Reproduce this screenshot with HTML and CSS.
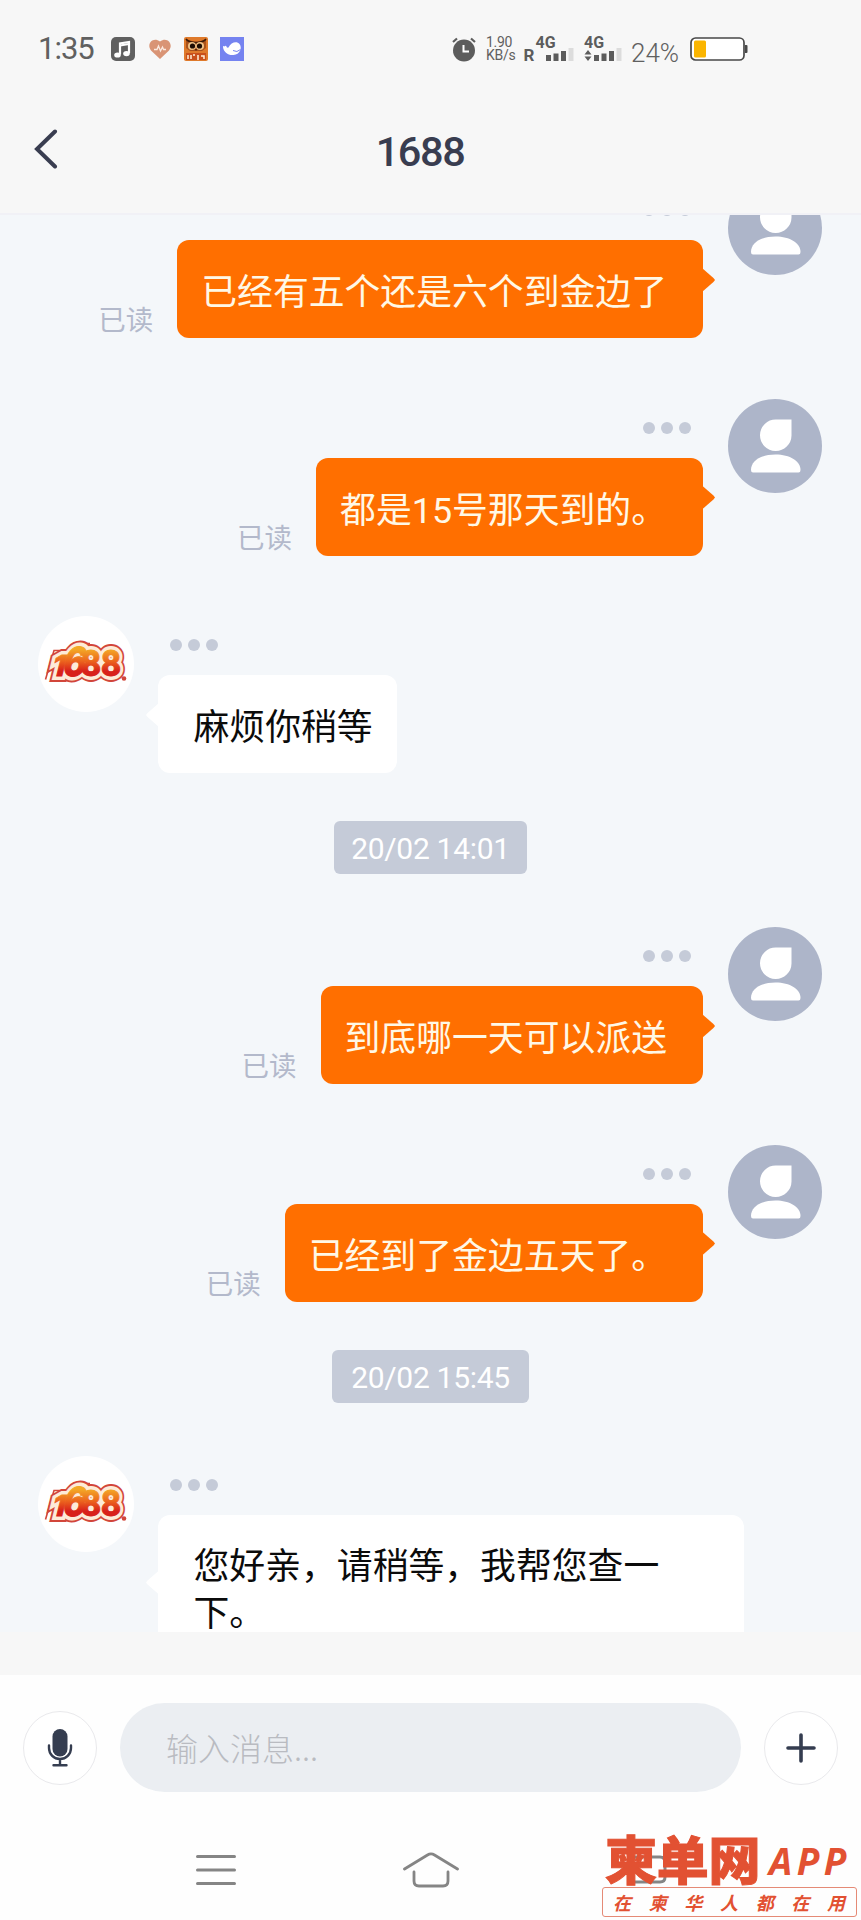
FILE: index.html
```html
<!DOCTYPE html>
<html lang="zh-CN">
<head>
<meta charset="utf-8">
<title>1688</title>
<link rel="stylesheet" href="styles.css">
</head>
<body>
<svg class="defs" width="0" height="0" aria-hidden="true">
  <defs>
    <linearGradient id="fire" gradientUnits="userSpaceOnUse" x1="0" y1="-29" x2="0" y2="0">
      <stop offset="0.1" stop-color="#f3a826"/>
      <stop offset="0.5" stop-color="#ec651e"/>
      <stop offset="0.85" stop-color="#d8201a"/>
    </linearGradient>
    <symbol id="user" viewBox="0 0 94 94">
      <circle cx="47" cy="47" r="47" fill="#adb5c9"/>
      <path d="M48 20.500H63.500V36.500A15.750 15.750 0 1 1 48 20.500Z" fill="#fff"/>
      <path d="M23 71C23 62 33 55.500 47.500 55.500S72.500 62 72.500 71Q72.500 73.500 70.500 73.500H25Q23 73.500 23 71Z" fill="#fff"/>
    </symbol>
    <symbol id="shop" viewBox="0 0 96 96">
      <circle cx="48" cy="48" r="48" fill="#fff"/>
      <path d="M7.500 63.500L16 34.500H29L36 27.500H52" fill="none" stroke="#d2463a" stroke-width="1.600"/>
      <g font-family="Inter, sans-serif" font-weight="800" font-size="35">
        <g fill="#d2463a" stroke="#d2463a" stroke-width="12" stroke-linejoin="miter"><text transform="translate(12.500 59.500) skewX(-14)" font-size="29" textLength="13" lengthAdjust="spacingAndGlyphs">1</text><text transform="translate(23 59.500) skewX(-12)" font-size="40" textLength="23" lengthAdjust="spacingAndGlyphs">6</text><text transform="translate(43 59.500)" textLength="40" lengthAdjust="spacingAndGlyphs">88</text></g>
        <g fill="#fdebd8" stroke="#fdebd8" stroke-width="8"><text transform="translate(12.500 59.500) skewX(-14)" font-size="29" textLength="13" lengthAdjust="spacingAndGlyphs">1</text><text transform="translate(23 59.500) skewX(-12)" font-size="40" textLength="23" lengthAdjust="spacingAndGlyphs">6</text><text transform="translate(43 59.500)" textLength="40" lengthAdjust="spacingAndGlyphs">88</text></g>
        <g fill="url(#fire)" stroke="url(#fire)" stroke-width="1"><text transform="translate(12.500 59.500) skewX(-14)" font-size="29" textLength="13" lengthAdjust="spacingAndGlyphs">1</text><text transform="translate(23 59.500) skewX(-12)" font-size="40" textLength="23" lengthAdjust="spacingAndGlyphs">6</text><text transform="translate(43 59.500)" textLength="40" lengthAdjust="spacingAndGlyphs">88</text></g>
      </g>
      <circle cx="86" cy="62.500" r="2.300" fill="#d2463a"/>
    </symbol>
  </defs>
</svg>
<div class="phone">
  <header class="top">
    <div class="status">
      <div class="status-left">
        <span class="time">1:35</span>
        <svg width="24" height="24" viewBox="0 0 24 24"><rect width="24" height="24" rx="5" fill="#606060"/><path d="M9 17.500V6.500L18 5V16" fill="none" stroke="#fff" stroke-width="2.200"/><path d="M9 8.500L18 7" stroke="#fff" stroke-width="2"/><ellipse cx="6.500" cy="18" rx="3.300" ry="2.600" fill="#fff"/><ellipse cx="15.500" cy="16.600" rx="3.300" ry="2.600" fill="#fff"/></svg>
        <svg class="heart" width="22" height="20" viewBox="0 0 22 20"><path d="M11 20L2 11.500C-3 5 4-3 11 2.500C18-3 25 5 20 11.500Z" fill="#d99475"/><path d="M5 10.500H8L9.500 7L11.500 12L13.500 8L14.500 10.500H17" fill="none" stroke="#fbe9e0" stroke-width="1.300"/></svg>
        <svg class="owl" width="24" height="24" viewBox="0 0 24 24"><rect width="24" height="24" rx="2" fill="#df7a2b"/><path d="M2 2L8 4H16L22 2V11L18 14H6L2 11Z" fill="#a8521c"/><path d="M2 2Q4 5 12 6Q20 5 22 2" fill="none" stroke="#3a1a08" stroke-width="1.500"/><circle cx="8" cy="9" r="4" fill="#f0c287"/><circle cx="16" cy="9" r="4" fill="#f0c287"/><circle cx="8.500" cy="9" r="2.600" fill="#1c0d05"/><circle cx="15.500" cy="9" r="2.600" fill="#1c0d05"/><path d="M11 12H13L12 14Z" fill="#3a1a08"/><rect x="2" y="16" width="20" height="7" fill="#c9501b"/><path d="M4 18V22M7 18V22M10 17V19M14 18V23M17 19H20V22" fill="none" stroke="#fff0d8" stroke-width="1.500"/></svg>
        <svg class="whale" width="24" height="24" viewBox="0 0 24 24"><rect width="24" height="24" fill="#7583f0"/><path d="M3 10Q3 8.500 4.500 9.500Q5.500 8 6.500 9.500Q6.500 11 8.500 10.500C11 5 17 4 19.500 7C22.500 11 20 17.500 13.500 18C8 18.500 3.500 15 3 10Z" fill="#fff"/><path d="M13 13.500Q17 16 20.500 12.500" fill="none" stroke="#7583f0" stroke-width="1"/></svg>
      </div>
      <div class="status-right">
        <svg width="24" height="25" viewBox="0 0 24 25"><circle cx="12" cy="13.500" r="11" fill="#5c5c5c"/><path d="M1 5L5 1.500M19 1.500L23 5" stroke="#5c5c5c" stroke-width="2.200"/><path d="M11.500 8V14.500H17" fill="none" stroke="#fff" stroke-width="2"/></svg>
        <span class="speed"><span>1.90</span><span>KB/s</span></span>
        <svg class="signal" width="50" height="26" viewBox="0 0 50 26"><text x="-.5" y="25" font-size="17">R</text><text x="11.500" y="12" font-size="16">4G</text><path d="M22 19h5v6h-5zM29.500 17.500h5v7.500h-5zM37 15h5v10h-5z" fill="#5c5c5c"/><path d="M44.500 12h5v13h-5z" fill="#dcdcdc"/></svg>
        <svg class="signal second" width="38" height="26" viewBox="0 0 38 26"><text x="0" y="12" font-size="16">4G</text><path d="M.5 18.500L4 14L7.500 18.500ZM.5 20.500L4 25L7.500 20.500ZM10 19h5v6h-5zM17.500 17.500h5v7.500h-5zM25 15h5v10h-5z" fill="#5c5c5c"/><path d="M32.500 12h5v13h-5z" fill="#dcdcdc"/></svg>
        <span class="percent">24%</span>
        <svg class="battery" width="58" height="24" viewBox="0 0 58 24"><rect x="1" y="1" width="53" height="22" rx="4.500" fill="#fff" stroke="#484848" stroke-width="1.700"/><rect x="4" y="3.500" width="12" height="17" rx="1.500" fill="#fbb500"/><path d="M55 8H56.500Q57.500 8 57.500 9V15Q57.500 16 56.500 16H55Z" fill="#484848"/></svg>
      </div>
    </div>
    <div class="titlebar">
      <svg class="back" width="24" height="40" viewBox="0 0 24 40"><path d="M21 2.500L3 20L21 37.500" fill="none" stroke="#393d50" stroke-width="4" stroke-linecap="round"/></svg>
      <h1>1688</h1>
    </div>
  </header>

  <main class="chat">
    <div class="msg mine">
      <span class="read">已读</span>
      <div class="col"><div class="dots"><i></i><i></i><i></i></div><div class="bubble">已经有五个还是六个到金边了</div></div>
      <svg class="avatar"><use href="#user"/></svg>
    </div>
    <div class="msg mine">
      <span class="read">已读</span>
      <div class="col"><div class="dots"><i></i><i></i><i></i></div><div class="bubble">都是<span class="num">15</span>号那天到的。</div></div>
      <svg class="avatar"><use href="#user"/></svg>
    </div>
    <div class="msg theirs">
      <svg class="avatar"><use href="#shop"/></svg>
      <div class="col"><div class="dots"><i></i><i></i><i></i></div><div class="bubble">麻烦你稍等</div></div>
    </div>
    <time class="stamp">20/02 14:01</time>
    <div class="msg mine">
      <span class="read">已读</span>
      <div class="col"><div class="dots"><i></i><i></i><i></i></div><div class="bubble">到底哪一天可以派送</div></div>
      <svg class="avatar"><use href="#user"/></svg>
    </div>
    <div class="msg mine">
      <span class="read">已读</span>
      <div class="col"><div class="dots"><i></i><i></i><i></i></div><div class="bubble">已经到了金边五天了。</div></div>
      <svg class="avatar"><use href="#user"/></svg>
    </div>
    <time class="stamp late">20/02 15:45</time>
    <div class="msg theirs">
      <svg class="avatar"><use href="#shop"/></svg>
      <div class="col"><div class="dots"><i></i><i></i><i></i></div><div class="bubble long">您好亲，请稍等，我帮您查一<br>下。</div></div>
    </div>
  </main>

  <footer class="bottom">
    <div class="composer">
      <div class="round"><svg width="26" height="40" viewBox="0 0 26 40"><rect x="5.500" y="1" width="15" height="27.500" rx="7.500" fill="#353d50"/><path d="M2 17.500V20A11 11 0 0 0 24 20V17.500M13 31V37M6.500 37.200H19.500" fill="none" stroke="#353d50" stroke-width="2.400" stroke-linecap="round"/></svg></div>
      <div class="field">输入消息...</div>
      <div class="round"><svg width="30" height="30" viewBox="0 0 30 30"><path d="M15 2V28M2 15H28" stroke="#353d50" stroke-width="3.600" stroke-linecap="round"/></svg></div>
    </div>
    <nav class="nav">
      <svg width="40" height="32" viewBox="0 0 40 32"><path d="M1.500 2.500H38.500M1.500 16H38.500M1.500 29.500H38.500" stroke="#858585" stroke-width="3" stroke-linecap="round"/></svg>
      <svg width="56" height="36" viewBox="0 0 56 36"><path d="M1.500 17L24.500 3Q28 .8 31.500 3L54.500 17M11 20V29Q11 34 16 34H40Q45 34 45 29V20" fill="none" stroke="#858585" stroke-width="2.800" stroke-linecap="round"/></svg>
      <svg width="42" height="32" viewBox="0 0 42 32"><path d="M2 9L9 3H34Q39 3 39 8V23Q39 28 34 28H8" fill="none" stroke="#858585" stroke-width="3" stroke-linecap="round"/></svg>
    </nav>
  </footer>

  <div class="brand">
    <div class="brand-name"><span class="brand-cn">柬单网</span><span class="brand-app">APP</span></div>
    <div class="brand-tag"><span>在</span><span>柬</span><span>华</span><span>人</span><span>都</span><span>在</span><span>用</span></div>
  </div>
</div>
</body>
</html>
```
FILE: styles.css
```css
* { box-sizing: border-box; }
body {
  margin: 0;
  background: #fefefe;
  font-family: "Noto Sans CJK SC", sans-serif;
}
svg { display: block; flex: none; }
.defs { position: absolute; }
.phone {
  position: relative;
  width: 861px;
  height: 1920px;
  overflow: hidden;
  display: flex;
  flex-direction: column;
}

/* status bar and title */
.top {
  height: 215px;
  background: #f7f7f7;
  border-bottom: 2px solid #f1f1f6;
  font-family: Roboto, sans-serif;
}
.status {
  height: 98px;
  padding: 0 113px 0 38px;
  display: flex;
  justify-content: space-between;
  align-items: center;
  color: #606060;
}
.status-left, .status-right { display: flex; align-items: center; }
.time { width: 56px; margin-right: 17px; font-size: 31px; line-height: 36px; letter-spacing: -1px; white-space: nowrap; }
.heart { margin-left: 14px; }
.owl { margin-left: 13px; }
.whale { margin-left: 12px; }
.speed { display: flex; flex-direction: column; width: 29px; margin: 0 9px 0 10px; font-size: 14px; line-height: 13px; letter-spacing: -.3px; white-space: nowrap; }
.signal { font-weight: 700; fill: #5c5c5c; overflow: visible; }
.second { margin-left: 10px; }
.percent { width: 50px; margin: 7px 0 0 9px; font-size: 26px; line-height: 30px; font-weight: 300; white-space: nowrap; }
.battery { margin-left: 9px; }
.titlebar { position: relative; height: 107px; display: flex; align-items: center; justify-content: center; }
.back { position: absolute; left: 34px; top: 31px; }
h1 { margin: 0 21px 0 0; font-size: 41.500px; line-height: 50px; font-weight: 500; letter-spacing: -1.400px; color: #393d50; }

/* conversation */
.chat {
  height: 1417px;
  overflow: hidden;
  background: #f4f7fa;
  display: flex;
  flex-direction: column;
  align-items: stretch;
}
.msg { flex: none; display: flex; align-items: flex-start; margin-bottom: 60.500px; }
.msg:first-child { margin-top: -34px; }
.mine { justify-content: flex-end; padding-right: 39px; }
.theirs { padding-left: 38px; margin-bottom: 0; }
.avatar { width: 94px; height: 94px; }
.theirs .avatar { width: 96px; height: 96px; }
.col { display: flex; flex-direction: column; }
.mine .col { margin: 0 25px 0 24px; align-items: flex-end; }
.theirs .col { margin-left: 23.500px; align-items: flex-start; }
.dots { display: flex; gap: 6px; padding: 23px 12px 0; height: 59px; }
.dots i { width: 12px; height: 12px; border-radius: 50%; background: #c5cbd8; }
.bubble {
  position: relative;
  height: 98px;
  padding: 26px 36px 24px 24px;
  border-radius: 12px;
  background: #ff6f00;
  color: #fff8e6;
  font-size: 35.850px;
  line-height: 47px;
  white-space: nowrap;
}
.bubble::after {
  content: "";
  position: absolute;
  top: calc(50% - 21px);
  right: -12px;
  width: 13px;
  height: 24px;
  background: inherit;
  clip-path: polygon(0 0, 88% 42%, 100% 50%, 88% 58%, 0 100%);
}
.theirs .bubble { background: #fff; color: #0b0b0b; padding: 26px 24px 24px 36px; width: 239px; }
.theirs .bubble.long { width: 586px; height: 147px; padding-top: 25px; }
.theirs .bubble::after { right: auto; left: -12px; transform: scaleX(-1); }
.bubble.long::after { top: calc(50% - 18px); }
.num { font-family: Roboto, sans-serif; line-height: 1; }
.read { margin-top: 118px; font-size: 27.500px; line-height: 39px; color: #b3b9cb; }
.stamp {
  flex: none;
  align-self: center;
  width: 193px;
  height: 53px;
  margin: 48px 0 53px;
  border-radius: 6px;
  background: #c5cbd8;
  color: #fff;
  font: 30px/56px Roboto, sans-serif;
  letter-spacing: -.3px;
  text-align: center;
  white-space: nowrap;
}
.late { width: 197px; margin-top: -12px; }

/* input and navigation */
.bottom { border-top: 43px solid #f7f7f7; height: 288px; background: #fefefe; }
.composer { display: flex; align-items: center; gap: 23px; padding: 28px 23px 0; }
.round { width: 74px; height: 74px; border: 1.500px solid #e9e9ec; border-radius: 50%; display: flex; align-items: center; justify-content: center; background: #fff; }
.field { flex: 1; height: 89px; border-radius: 45px; background: #ebeef2; padding-left: 46px; font-size: 32px; line-height: 89px; font-weight: 300; color: #b9bbc1; }
.nav { display: flex; align-items: center; gap: 167px; padding: 59px 0 0 196px; height: 97px; }

/* brand mark over the navigation bar */
.brand { position: absolute; left: 602px; top: 1830px; width: 255px; color: #e25132; font-weight: 900; }
.brand-name { height: 57px; display: flex; align-items: center; }
.brand-cn { margin-left: 3px; width: 164px; font-size: 52px; line-height: 54px; letter-spacing: -.3px; margin-bottom: 1px; white-space: nowrap; -webkit-text-stroke: 1px #e25132; }
.brand-app { margin-top: 4px; font: italic 700 37px/40px "Open Sans", sans-serif; letter-spacing: 4.500px; }
.brand-tag { height: 30px; border: 1.500px solid #e58a76; border-radius: 3px; display: flex; justify-content: space-between; align-items: center; padding: 0 11px 0 10px; font-size: 18px; line-height: 26px; font-weight: 700; font-style: italic; }
```
